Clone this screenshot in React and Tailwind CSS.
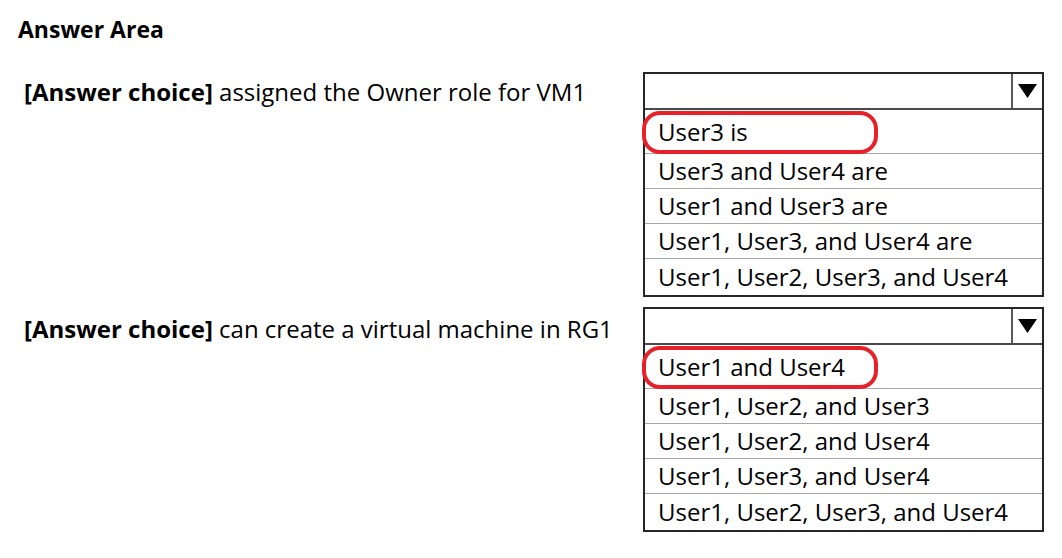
const questions = [
  {
    prefix: "[Answer choice]",
    text: "assigned the Owner role for VM1",
    options: [
      "User3 is",
      "User3 and User4 are",
      "User1 and User3 are",
      "User1, User3, and User4 are",
      "User1, User2, User3, and User4",
    ],
  },
  {
    prefix: "[Answer choice]",
    text: "can create a virtual machine in RG1",
    options: [
      "User1 and User4",
      "User1, User2, and User3",
      "User1, User2, and User4",
      "User1, User3, and User4",
      "User1, User2, User3, and User4",
    ],
  },
];

const font = { fontFamily: "'Open Sans', Lato, sans-serif" };

const Dropdown = ({ options }) => (
  <div className="w-[401px] border-2 border-[#262626] bg-white">
    {/* Header */}
    <div className="flex h-[36px] border-b-2 border-[#4a4a4a]">
      <div className="flex-1" />
      <div className="w-[31px] border-l-2 border-[#5a5a5a] flex items-center justify-center">
        <svg width="19" height="14" viewBox="0 0 19 14">
          <path d="M0 0 L19 0 L9.5 14 Z" fill="#000" />
        </svg>
      </div>
    </div>

    {/* Options */}
    {options.map((opt, i) => (
      <div
        key={opt}
        className={
          i === 0
            ? "relative h-[44px] flex items-center pl-[13px] border-b border-[#a8a8a8]"
            : i === options.length - 1
            ? "h-[36px] flex items-center pl-[13px]"
            : "h-[35px] flex items-center pl-[13px] border-b border-[#a8a8a8]"
        }
      >
        {i === 0 && (
          <div className="absolute left-[-3px] top-[1px] w-[236px] h-[43px] border-[4px] border-[#e8202a] rounded-[18px]" />
        )}
        <span className="text-[24px] text-black leading-none">{opt}</span>
      </div>
    ))}
  </div>
);

export default function App() {
  return (
    <div className="w-[1062px] h-[558px] bg-white text-black" style={font}>
      <div className="pl-[18px] pt-[18px]">
        <h1 className="text-[23px] font-bold leading-none">Answer Area</h1>
      </div>

      <div className="flex flex-col gap-[10px] mt-[31px]">
        {questions.map((q, i) => (
          <div key={i} className="flex">
            <div
              className={
                i === 0
                  ? "w-[643px] pl-[24px] pt-[8px] text-[24px] leading-none"
                  : "w-[643px] pl-[24px] pt-[10px] text-[24px] leading-none"
              }
            >
              <span className="font-bold">{q.prefix}</span> {q.text}
            </div>
            <Dropdown options={q.options} />
          </div>
        ))}
      </div>
    </div>
  );
}
